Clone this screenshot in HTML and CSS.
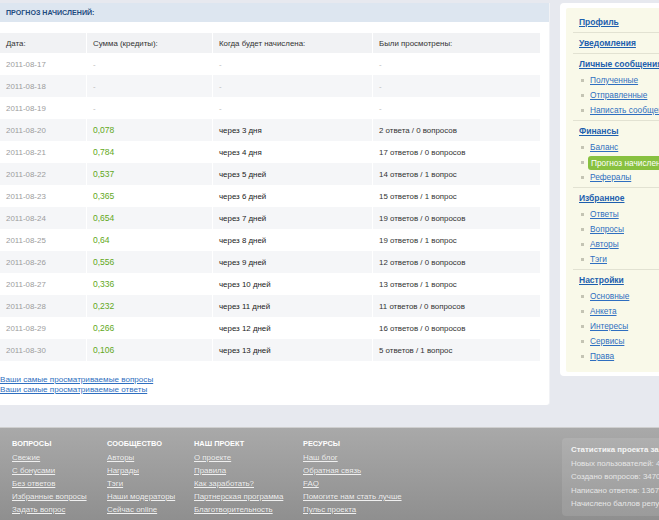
FILE: index.html
```html
<!DOCTYPE html>
<html lang="ru">
<head>
<meta charset="utf-8">
<title>Прогноз начислений</title>
<link rel="stylesheet" href="styles.css">
</head>
<body>
<div class="layout">
  <main class="main">
    <h1 class="title">ПРОГНОЗ НАЧИСЛЕНИЙ:</h1>
    <table class="grid">
      <thead>
        <tr><th class="c1">Дата:</th><th class="c2">Сумма (кредиты):</th><th class="c3">Когда будет начислена:</th><th class="c4">Были просмотрены:</th></tr>
      </thead>
      <tbody>
        <tr><td class="date">2011-08-17</td><td class="dash">-</td><td class="dash">-</td><td class="dash">-</td></tr>
        <tr><td class="date">2011-08-18</td><td class="dash">-</td><td class="dash">-</td><td class="dash">-</td></tr>
        <tr><td class="date">2011-08-19</td><td class="dash">-</td><td class="dash">-</td><td class="dash">-</td></tr>
        <tr><td class="date">2011-08-20</td><td class="sum">0,078</td><td class="when">через 3 дня</td><td>2 ответа / 0 вопросов</td></tr>
        <tr><td class="date">2011-08-21</td><td class="sum">0,784</td><td class="when">через 4 дня</td><td>17 ответов / 0 вопросов</td></tr>
        <tr><td class="date">2011-08-22</td><td class="sum">0,537</td><td class="when">через 5 дней</td><td>14 ответов / 1 вопрос</td></tr>
        <tr><td class="date">2011-08-23</td><td class="sum">0,365</td><td class="when">через 6 дней</td><td>15 ответов / 1 вопрос</td></tr>
        <tr><td class="date">2011-08-24</td><td class="sum">0,654</td><td class="when">через 7 дней</td><td>19 ответов / 0 вопросов</td></tr>
        <tr><td class="date">2011-08-25</td><td class="sum">0,64</td><td class="when">через 8 дней</td><td>19 ответов / 1 вопрос</td></tr>
        <tr><td class="date">2011-08-26</td><td class="sum">0,556</td><td class="when">через 9 дней</td><td>12 ответов / 0 вопросов</td></tr>
        <tr><td class="date">2011-08-27</td><td class="sum">0,336</td><td class="when">через 10 дней</td><td>13 ответов / 1 вопрос</td></tr>
        <tr><td class="date">2011-08-28</td><td class="sum">0,232</td><td class="when">через 11 дней</td><td>11 ответов / 0 вопросов</td></tr>
        <tr><td class="date">2011-08-29</td><td class="sum">0,266</td><td class="when">через 12 дней</td><td>16 ответов / 0 вопросов</td></tr>
        <tr><td class="date">2011-08-30</td><td class="sum">0,106</td><td class="when">через 13 дней</td><td>5 ответов / 1 вопрос</td></tr>
      </tbody>
    </table>
    <div class="more">
      <a href="#">Ваши самые просматриваемые вопросы</a>
      <a href="#">Ваши самые просматриваемые ответы</a>
    </div>
  </main>
  <aside class="side">
    <div class="side-inner">
      <div class="sec"><a class="head" href="#">Профиль</a></div>
      <div class="sec"><a class="head" href="#">Уведомления</a></div>
      <div class="sec"><a class="head" href="#">Личные сообщения</a>
        <ul class="sub">
          <li><a href="#">Полученные</a></li>
          <li><a href="#">Отправленные</a></li>
          <li><a href="#">Написать сообщение</a></li>
        </ul>
      </div>
      <div class="sec"><a class="head" href="#">Финансы</a>
        <ul class="sub">
          <li><a href="#">Баланс</a></li>
          <li><span class="active">Прогноз начисления</span></li>
          <li><a href="#">Рефералы</a></li>
        </ul>
      </div>
      <div class="sec"><a class="head" href="#">Избранное</a>
        <ul class="sub">
          <li><a href="#">Ответы</a></li>
          <li><a href="#">Вопросы</a></li>
          <li><a href="#">Авторы</a></li>
          <li><a href="#">Тэги</a></li>
        </ul>
      </div>
      <div class="sec last"><a class="head" href="#">Настройки</a>
        <ul class="sub">
          <li><a href="#">Основные</a></li>
          <li><a href="#">Анкета</a></li>
          <li><a href="#">Интересы</a></li>
          <li><a href="#">Сервисы</a></li>
          <li><a href="#">Права</a></li>
        </ul>
      </div>
    </div>
  </aside>
</div>
<footer class="foot">
  <div class="fcol w1">
    <div class="fhead">ВОПРОСЫ</div>
    <a href="#">Свежие</a><a href="#">С бонусами</a><a href="#">Без ответов</a><a href="#">Избранные вопросы</a><a href="#">Задать вопрос</a>
  </div>
  <div class="fcol w2">
    <div class="fhead">СООБЩЕСТВО</div>
    <a href="#">Авторы</a><a href="#">Награды</a><a href="#">Тэги</a><a href="#">Наши модераторы</a><a href="#">Сейчас online</a>
  </div>
  <div class="fcol w3">
    <div class="fhead">НАШ ПРОЕКТ</div>
    <a href="#">О проекте</a><a href="#">Правила</a><a href="#">Как заработать?</a><a href="#">Партнерская программа</a><a href="#">Благотворительность</a>
  </div>
  <div class="fcol w4">
    <div class="fhead">РЕСУРСЫ</div>
    <a href="#">Наш блог</a><a href="#">Обратная связь</a><a href="#">FAQ</a><a href="#">Помогите нам стать лучше</a><a href="#">Пульс проекта</a>
  </div>
  <div class="stats">
    <div class="stitle">Статистика проекта за сутки:</div>
    <div>Новых пользователей: 48</div>
    <div>Создано вопросов: 3470</div>
    <div>Написано ответов: 13675</div>
    <div>Начислено баллов репутации: 20451</div>
  </div>
</footer>
</body>
</html>
```
FILE: styles.css
```css
html, body {
  margin: 0;
  padding: 0;
  overflow: hidden;
}
body {
  width: 659px;
  height: 520px;
  background: #e7e9ef;
  font-family: "Liberation Sans", Arial, sans-serif;
  font-size: 7.9px;
  color: #333;
}
a { color: #2a6cb8; }

.layout {
  display: flex;
  gap: 11px;
  padding-top: 3px;
  height: 424px;
  width: 760px;
}
.main {
  width: 549px;
  flex: none;
  height: 402px;
  background: #fff;
  border-radius: 0 0 3px 0;
  box-shadow: 1px 0 0 #f1f2f5;
}
.title {
  margin: 0;
  height: 19px;
  line-height: 20px;
  padding-left: 6px;
  background: #dde6f0;
  color: #1f4d80;
  font-size: 7.1px;
  font-weight: bold;
}
.grid {
  margin-top: 11px;
  width: 540px;
  border-collapse: collapse;
}
.grid th, .grid td {
  text-align: left;
  padding: 0 0 0 6px;
  height: 22px;
  font-weight: normal;
  border-left: 1px solid #fff;
}
.grid th:first-child, .grid td:first-child { border-left: 0; }
.grid thead th { height: 20px; background: #f1f2f4; color: #333; }
.grid tbody tr:nth-child(even) td { background: #f5f6f8; }
.c1 { width: 80px; }
.c2 { width: 119px; }
.c3 { width: 153px; }
.date { color: #9c9c9c; }
.dash { color: #b8b8b8; }
.sum { color: #62a81a; font-weight: bold; font-size: 8.5px; }
.when { color: #222; }

.more {
  display: flex;
  flex-direction: column;
  align-items: flex-start;
  margin-top: 14px;
  line-height: 10px;
  font-size: 8.1px;
}
.more a { color: #2f6fc0; }

.side {
  width: 200px;
  flex: none;
  align-self: flex-start;
  background: #fff;
  border-radius: 4px;
  padding: 5px 0 4px 6px;
}
.side-inner {
  background: #f9f9e9;
  padding: 4px 0 6px 7px;
  border-radius: 2px;
  font-size: 8.3px;
}
.sec {
  padding: 4px 0 4px 6px;
  border-bottom: 1px solid #e2e2d2;
  display: flex;
  flex-direction: column;
  align-items: flex-start;
}
.sec.last { border-bottom: 0; }
.head {
  font-weight: bold;
  line-height: 12px;
  color: #1d5fae;
  font-size: 8.5px;
}
.sub {
  list-style: none;
  margin: 3px 0 -2px;
  padding: 0;
}
.sub li {
  display: flex;
  align-items: center;
  line-height: 15px;
  height: 15px;
}
.sub li::before {
  content: "";
  width: 3px;
  height: 3px;
  background: #c4c4b4;
  margin: 0 6px 0 2px;
}
.sub a { color: #2f6fc0; }
.active {
  background: #88c140;
  color: #fff;
  line-height: 14px;
  padding: 0 3px;
  border-radius: 3px 0 0 3px;
  margin-left: -2px;
  width: 90px;
}

.foot {
  height: 93px;
  border-top: 1px solid #cfcfcf;
  background: linear-gradient(#a9a9a9, #8f8f8f);
  display: flex;
  padding-left: 12px;
  box-sizing: border-box;
  width: 760px;
}
.fcol {
  display: flex;
  flex-direction: column;
  align-items: flex-start;
  padding-top: 10px;
  flex: none;
}
.w1 { width: 95px; }
.w2 { width: 87px; }
.w3 { width: 109px; }
.w4 { width: 259px; }
.fhead {
  color: #fff;
  font-weight: bold;
  font-size: 7.4px;
  line-height: 11px;
  margin-bottom: 2px;
}
.fcol a {
  color: #f0f0f0;
  line-height: 13px;
  font-size: 7.9px;
  text-shadow: 0 0 1px rgba(0,0,0,0.15);
}
.stats {
  margin-top: 10px;
  height: 78px;
  width: 160px;
  background: rgba(255,255,255,0.1);
  border-radius: 4px;
  padding: 5px 0 0 9px;
  box-sizing: border-box;
  color: #e6e6e6;
  font-size: 7.9px;
  line-height: 13.5px;
  white-space: nowrap;
}
.stitle { color: #f4f4f4; font-weight: bold; }
```
